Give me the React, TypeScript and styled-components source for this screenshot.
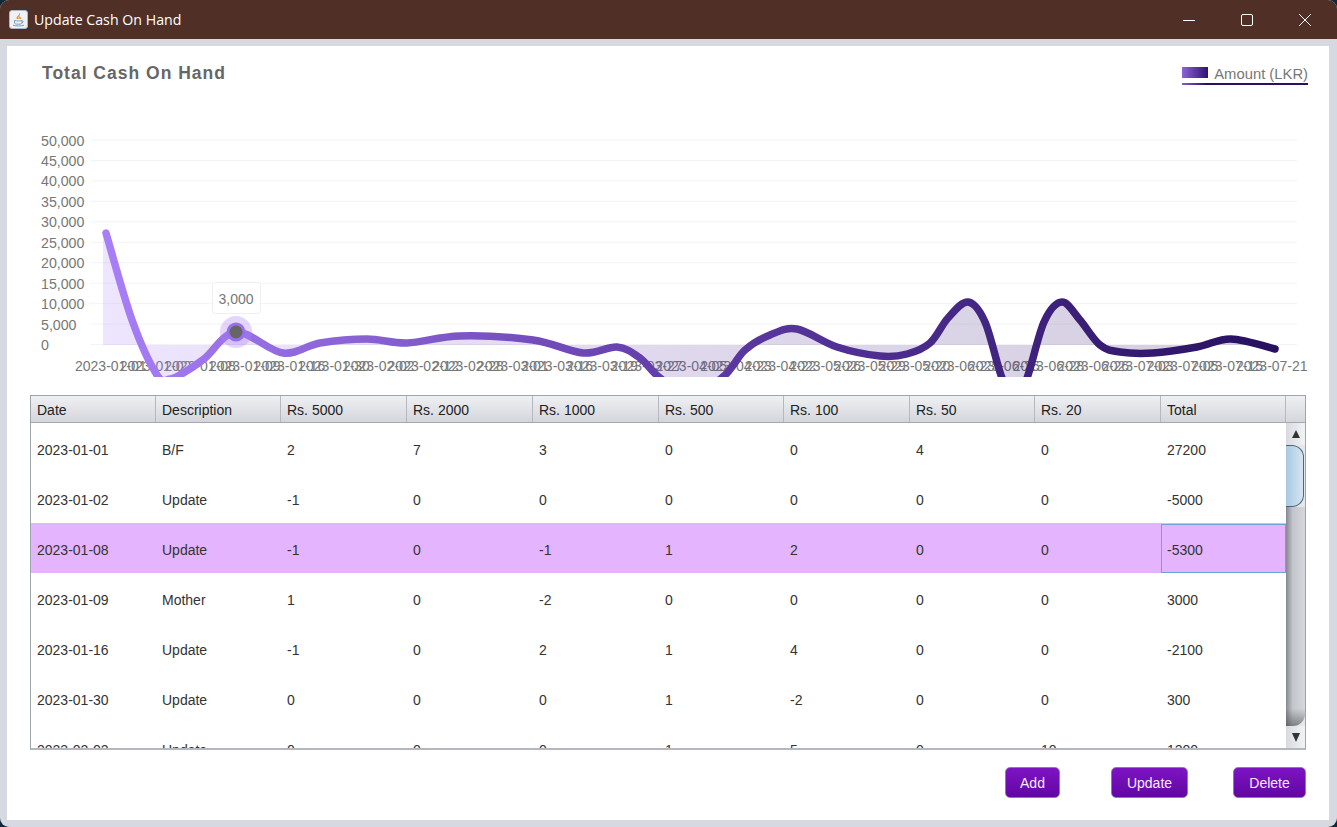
import React from "react";
import styled, { createGlobalStyle } from "styled-components";

const Global = createGlobalStyle`
  html, body { margin: 0; padding: 0; background: #0f2a3b; }
  body { font-family: "Liberation Sans", Arial, sans-serif; overflow: hidden; }
`;

const Win = styled.div`
  width: 1337px; height: 827px; box-sizing: border-box;
  display: flex; flex-direction: column;
  background: #d6d9e0; border-radius: 9px; overflow: hidden;
`;
const TitleBar = styled.header`
  height: 39px; flex: none; background: #503026; color: #fff;
  display: flex; align-items: center; padding-left: 9px;
`;
const TitleText = styled.span`
  font-family: "Open Sans", "Noto Sans", sans-serif; font-size: 14.2px; margin-left: 6px; flex: 1;
`;
const WinControl = styled.div`
  width: 58px; height: 39px; display: flex; align-items: center; justify-content: center;
`;
const Controls = styled.div`
  display: flex; padding-right: 3px;
`;
const Panel = styled.main`
  flex: 1; margin: 7px 8px 7px 7px; background: #fff;
  display: flex; flex-direction: column; min-height: 0;
`;
const ChartHead = styled.div`
  height: 54px; flex: none; box-sizing: border-box; display: flex; justify-content: space-between;
  padding: 17px 21px 0 35px;
`;
const ChartTitle = styled.h1`
  margin: 0; font-size: 17.5px; line-height: 20px; font-weight: 700; color: #666; letter-spacing: 1px;
`;
const Legend = styled.div`
  height: 22px; box-sizing: border-box; display: flex; align-items: center; gap: 6px;
  padding-top: 1px; border-bottom: 2px solid; border-image: linear-gradient(90deg, #8a5fd0, #2a0f63 20%, #2a0f63) 1;
  font-size: 14.8px; line-height: 16px; color: #777;
`;
const LegendSwatch = styled.span`
  width: 26px; height: 11px; margin-bottom: 3px; background: linear-gradient(90deg, #8e63d6, #2e1270);
`;
const ChartSvg = styled.svg`
  display: block; flex: none; width: 1322px; height: 295px;
`;
const TableWrap = styled.section`
  margin-left: 23px; width: 1276px; height: 355px; box-sizing: border-box; flex: none;
  border: 1px solid #9fa3ab; border-bottom: 2px solid #b4b7bd; display: flex; flex-direction: column; overflow: hidden;
`;
const HeadRow = styled.div`
  height: 27px; flex: none; box-sizing: border-box; display: flex;
  background: linear-gradient(180deg, #eff0f3, #d4d6dc);
  border-bottom: 1px solid #a5a8b0;
`;
const HeadCell = styled.div<{ $w: number }>`
  width: ${p => p.$w}px; flex: none; box-sizing: border-box; padding: 1px 0 0 6px;
  font-size: 14px; line-height: 26px; color: #222; border-right: 1px solid #b5b8be;
`;
const HeadFiller = styled.div`flex: 1;`;
const BodyArea = styled.div`
  flex: 1; display: flex; min-height: 0;
`;
const Rows = styled.div`
  width: 1255px; flex: none; overflow: hidden;
`;
const Row = styled.div<{ $sel?: boolean }>`
  height: 50px; display: flex; background: ${p => (p.$sel ? "#e4b4fe" : "#fff")};
`;
const Cell = styled.div<{ $w: number; $focus?: boolean }>`
  width: ${p => p.$w}px; flex: none; box-sizing: border-box; padding: 3px 0 0 6px;
  font-size: 14px; line-height: 48px; color: #333;
  ${p => p.$focus ? "height: 49px; margin-top: 1px; border: 1px solid #6fa3d6; padding: 2px 0 0 5px; line-height: 46px;" : ""}
`;
const Scroll = styled.div`
  flex: 1; display: flex; flex-direction: column;
  background: #e6e7ea;
`;
const ScrollBtn = styled.div`
  height: 22px; flex: none; display: flex; align-items: center; justify-content: center;
  background: linear-gradient(90deg, #d8dadf, #f2f3f5);
`;
const Thumb = styled.div`
  height: 62px; flex: none; box-sizing: border-box;
  background: linear-gradient(90deg, #a9c8e1, #d6e6f3);
  border: 1px solid #4d6679; border-left: none; border-radius: 0 12px 12px 0; margin-right: 1px;
`;
const Track = styled.div`
  flex: 1;
  background:
    linear-gradient(180deg, rgba(70,70,70,0) 92%, rgba(70,70,70,0.55)),
    linear-gradient(90deg, #85888e, #c2c5cb 35%, #d5d7dd);
  border-bottom-right-radius: 12px;
`;
const Actions = styled.div`
  flex: 1; display: flex; justify-content: flex-end; align-items: flex-start;
  padding: 17px 23px 0 0;
`;
const Btn = styled.button<{ $w: number; $ml: number }>`
  width: ${p => p.$w}px; height: 31px; margin-left: ${p => p.$ml}px; padding: 0;
  font: 14px "Liberation Sans", Arial, sans-serif; color: #f4ecff;
  background: linear-gradient(180deg, #7d14c4, #6206a2);
  border: 1px solid #85858e; border-radius: 5px;
`;

const pts: [number, number][] = [
  [106, 233], [132, 320], [157, 375], [170, 379], [180, 375], [204, 359], [236, 332], [283, 353], [320, 343], [367, 339],
  [407, 343], [460, 336], [533, 340], [583, 353], [617, 347], [640, 358], [660, 378], [690, 396], [723, 377], [745, 350],
  [770, 335], [797, 329], [837, 347], [880, 356], [907, 354], [930, 343], [948, 318], [968, 302], [985, 322], [1002, 378], [1015, 396], [1027, 378],
  [1044, 322], [1062, 302], [1080, 320], [1100, 345], [1120, 352], [1153, 353], [1197, 347], [1231, 339], [1275, 349],
];
function spline(p: [number, number][]) {
  let d = `M${p[0][0]} ${p[0][1]}`;
  for (let i = 0; i < p.length - 1; i++) {
    const a = p[Math.max(i - 1, 0)], b = p[i], c = p[i + 1], e = p[Math.min(i + 2, p.length - 1)];
    d += ` C${(b[0] + (c[0] - a[0]) / 6).toFixed(1)} ${(b[1] + (c[1] - a[1]) / 6).toFixed(1)} ${(c[0] - (e[0] - b[0]) / 6).toFixed(1)} ${(c[1] - (e[1] - b[1]) / 6).toFixed(1)} ${c[0]} ${c[1]}`;
  }
  return d;
}
const line = spline(pts);
const area = `${line} L1275 345 L103 345 L103 233 Z`;
const yTicks = ["50,000", "45,000", "40,000", "35,000", "30,000", "25,000", "20,000", "15,000", "10,000", "5,000", "0"];
const dates = ["01-01", "01-02", "01-08", "01-09", "01-16", "01-30", "02-02", "02-12", "02-28", "03-01", "03-16", "03-19", "03-27", "04-05", "04-23", "04-22", "05-26", "05-29", "05-20", "06-23", "06-25", "06-28", "06-26", "07-03", "07-05", "07-15", "07-21"];
const cols = ["Date", "Description", "Rs. 5000", "Rs. 2000", "Rs. 1000", "Rs. 500", "Rs. 100", "Rs. 50", "Rs. 20", "Total"];
const widths = [125, 125, 126, 126, 126, 125, 126, 125, 126, 125];
const rows = [
  ["2023-01-01", "B/F", "2", "7", "3", "0", "0", "4", "0", "27200"],
  ["2023-01-02", "Update", "-1", "0", "0", "0", "0", "0", "0", "-5000"],
  ["2023-01-08", "Update", "-1", "0", "-1", "1", "2", "0", "0", "-5300"],
  ["2023-01-09", "Mother", "1", "0", "-2", "0", "0", "0", "0", "3000"],
  ["2023-01-16", "Update", "-1", "0", "2", "1", "4", "0", "0", "-2100"],
  ["2023-01-30", "Update", "0", "0", "0", "1", "-2", "0", "0", "300"],
  ["2023-02-02", "Update", "0", "0", "0", "1", "5", "0", "10", "1200"],
];

function JavaIcon() {
  return (
    <svg width="19" height="19" viewBox="0 0 19 19">
      <rect x="0.5" y="0.5" width="18" height="18" rx="2.5" fill="#eef1f5" stroke="#a9b9c9" />
      <path d="M10.500 2.500c1.400 1.800-.6 2.700 .4 4.200.5.700 1.500.8 1.300 2.300H7.800c-1-1.700.6-2.400 1.400-3.400.7-.9 1.300-1.700 1.300-3.100z" fill="#ec8a2e" />
      <path d="M10.200 5.500c-.8 1-1.300 1.700-.9 3.300h1.400c.3-1.200-.8-1.800-.5-3.300z" fill="#f7d27a" />
      <path d="M5.500 10.500c2.300.6 5.500.6 7.500 0v2.300c0 .9-1 1.400-3.700 1.400-2.700 0-3.800-.5-3.800-1.400z" fill="none" stroke="#6f93b3" strokeWidth="0.9" />
      <path d="M13 11c1.300-.2 1.700 1.200 0 1.700M4 15.200c3 1 8 1 11 0" stroke="#6f93b3" strokeWidth="0.9" fill="none" />
    </svg>
  );
}

export default function App() {
  return (
    <Win>
      <Global />
      <TitleBar>
        <JavaIcon />
        <TitleText>Update Cash On Hand</TitleText>
        <Controls>
          <WinControl>
            <svg width="14" height="14" viewBox="0 0 14 14"><path d="M1 7.500h12" stroke="#fff" strokeWidth="1" /></svg>
          </WinControl>
          <WinControl>
            <svg width="14" height="14" viewBox="0 0 14 14"><rect x="1.500" y="1.500" width="11" height="11" rx="1.500" fill="none" stroke="#fff" /></svg>
          </WinControl>
          <WinControl>
            <svg width="14" height="14" viewBox="0 0 14 14"><path d="M1 1l12 12M13 1L1 13" stroke="#fff" strokeWidth="1" /></svg>
          </WinControl>
        </Controls>
      </TitleBar>
      <Panel>
        <ChartHead>
          <ChartTitle>Total Cash On Hand</ChartTitle>
          <Legend><LegendSwatch />Amount (LKR)</Legend>
        </ChartHead>
        <ChartSvg viewBox="7 100 1322 295">
          <defs>
            <linearGradient id="g" gradientUnits="userSpaceOnUse" x1="103" y1="0" x2="1277" y2="0">
              <stop offset="0" stopColor="#a97ff8" />
              <stop offset="0.5" stopColor="#5f3ba6" />
              <stop offset="1" stopColor="#27105f" />
            </linearGradient>
            <clipPath id="c"><rect x="90" y="100" width="1220" height="277" /></clipPath>
          </defs>
          {yTicks.map((t, i) => {
            const y = 140 + i * 20.45;
            return (
              <g key={t}>
                <line x1="90" x2="1297" y1={y} y2={y} stroke="#f3f3f3" />
                <text x="41" y={y + 5.5} fontSize="14.200" fill="#777" fontFamily="Liberation Sans">{t}</text>
              </g>
            );
          })}
          {dates.map((d, i) => (
            <text key={i} x={110.8 + (i * 1161) / 26} y="371" textAnchor="middle" fontSize="14" fill="#777" fontFamily="Liberation Sans">{`2023-${d}`}</text>
          ))}
          <g clipPath="url(#c)">
            <path d={area} fill="url(#g)" opacity="0.2" />
            <path d={line} fill="none" stroke="url(#g)" strokeWidth="7.500" strokeLinecap="round" strokeLinejoin="round" />
          </g>
          <circle cx="236" cy="332" r="16" fill="#a97ff8" opacity="0.33" />
          <circle cx="236" cy="332" r="8" fill="#666" stroke="#9a70ea" strokeWidth="3" />
          <rect x="212.500" y="282.500" width="48" height="31" rx="3" fill="#fff" stroke="#eee" />
          <text x="236" y="304" textAnchor="middle" fontSize="14" fill="#777" fontFamily="Liberation Sans">3,000</text>
        </ChartSvg>
        <TableWrap>
          <HeadRow>
            {cols.map((c, i) => <HeadCell key={c} $w={widths[i]}>{c}</HeadCell>)}
            <HeadFiller />
          </HeadRow>
          <BodyArea>
            <Rows>
              {rows.map((r, i) => (
                <Row key={r[0]} $sel={i === 2}>
                  {r.map((v, j) => <Cell key={j} $w={widths[j]} $focus={i === 2 && j === 9}>{v}</Cell>)}
                </Row>
              ))}
            </Rows>
            <Scroll>
              <ScrollBtn>
                <svg width="8" height="8" viewBox="0 0 8 8"><path d="M4 0l4 8H0z" fill="#333" /></svg>
              </ScrollBtn>
              <Thumb />
              <Track />
              <ScrollBtn>
                <svg width="8" height="9" viewBox="0 0 8 9"><path d="M0 0h8L4 9z" fill="#333" /></svg>
              </ScrollBtn>
            </Scroll>
          </BodyArea>
        </TableWrap>
        <Actions>
          <Btn $w={55} $ml={0}>Add</Btn>
          <Btn $w={77} $ml={51}>Update</Btn>
          <Btn $w={73} $ml={45}>Delete</Btn>
        </Actions>
      </Panel>
    </Win>
  );
}
